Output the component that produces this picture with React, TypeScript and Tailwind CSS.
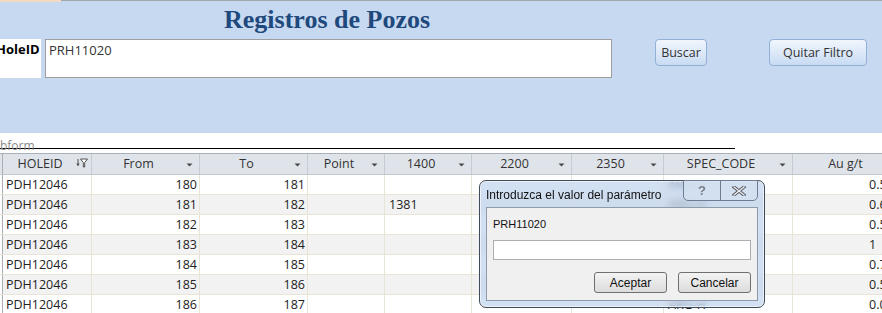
import React from "react";

const cols = [
  { label: "HOLEID", w: 89, filter: true },
  { label: "From", w: 108 },
  { label: "To", w: 108 },
  { label: "Point", w: 77 },
  { label: "1400", w: 87 },
  { label: "2200", w: 100 },
  { label: "2350", w: 92 },
  { label: "SPEC_CODE", w: 129 },
  { label: "Au g/t", w: 120 },
];

const rows = [
  { from: 180, to: 181, v1400: "", au: "0.53" },
  { from: 181, to: 182, v1400: "1381", au: "0.61" },
  { from: 182, to: 183, v1400: "", au: "0.52" },
  { from: 183, to: 184, v1400: "", au: "1" },
  { from: 184, to: 185, v1400: "", au: "0.74" },
  { from: 185, to: 186, v1400: "", au: "0.55" },
  { from: 186, to: 187, v1400: "", au: "0.004" },
];

function DropArrow() {
  return (
    <svg width="7" height="4" viewBox="0 0 7 4" className="absolute right-[6px] top-[9px]">
      <path d="M0.5 0.5 H6.5 L3.5 3.5 Z" fill="#4a4a4a" />
    </svg>
  );
}

function FilterIcon() {
  return (
    <svg width="12" height="10" viewBox="0 0 12 10" className="absolute right-[3px] top-[4px]">
      <path d="M2 1 V7.5" stroke="#505050" strokeWidth="1" />
      <path d="M0.3 5.5 L2 8.3 L3.7 5.5 Z" fill="#505050" />
      <path d="M4.5 1 H11.5 L8.7 4.6 V9 H7.3 V4.6 Z" fill="#fff" stroke="#505050" strokeWidth="1" />
    </svg>
  );
}

export default function App() {
  return (
    <div className="relative w-[882px] h-[313px] overflow-hidden bg-white font-['Open_Sans',sans-serif] text-[#222]">
      {/* window top strip */}
      <div className="flex h-[2px] bg-[#c6d9f0]">
        <div className="w-[61px] bg-[#f1dcc3]" />
        <div className="flex-1 h-[1px] bg-[#a2a6ad]" />
      </div>

      {/* form header */}
      <div className="h-[131px] bg-[#c6d9f0]">
        <div className="h-[37px] pl-[224px] pt-[3px] font-['Liberation_Serif',serif] font-bold text-[26px] leading-[30px] text-[#1f497d]">
          Registros de Pozos
        </div>
        <div className="flex items-start">
          <div className="w-[41px] h-[39px] bg-white overflow-hidden">
            <div className="-ml-[4px] pt-[1px] text-[13px] font-bold text-black leading-[18px]">HoleID</div>
          </div>
          <div className="ml-[4px] w-[567px] h-[39px] border border-[#9e9e9e] bg-white pl-[3px] pt-[1px] text-[13px] leading-[18px] text-[#333]">
            PRH11020
          </div>
          <button className="ml-[43px] w-[52px] h-[27px] rounded-[4px] border border-[#92b1d8] bg-gradient-to-b from-[#f1f6fd] to-[#c8dbf3] pt-[1px] text-[12.5px] text-[#333] leading-none">
            Buscar
          </button>
          <button className="ml-[62px] w-[98px] h-[27px] rounded-[4px] border border-[#92b1d8] bg-gradient-to-b from-[#f1f6fd] to-[#c8dbf3] pt-[1px] text-[12.5px] text-[#333] leading-none">
            Quitar Filtro
          </button>
        </div>
      </div>

      {/* subform label */}
      <div className="relative h-[20px] bg-white">
        <div className="w-[735px] h-[16px] border-b border-black" />
        <div className="absolute left-[-14px] top-[7px] text-[12px] leading-none text-[#8c8c8c]">Subform</div>
      </div>

      {/* datasheet */}
      <div className="flex flex-col border-t border-[#aab1ba]">
        <div className="flex h-[21px] bg-[#dfe4ea] border-b border-[#c3c9d0]">
          <div className="w-[3px] shrink-0 border-r border-[#a9aeb5]" />
          {cols.map((c) => (
            <div
              key={c.label}
              style={{ width: c.w }}
              className="relative shrink-0 border-r border-[#c6ccd3] pr-[14px] text-center text-[12.5px] leading-[20px] text-[#333]"
            >
              {c.label}
              {c.filter ? <FilterIcon /> : <DropArrow />}
            </div>
          ))}
        </div>
        {rows.map((r, i) => (
          <div
            key={i}
            className={`flex h-[20px] border-b border-[#e8e5d6] text-[12.5px] leading-[20px] text-[#222] ${
              i % 2 === 1 ? "bg-[#f2f2f2]" : "bg-white"
            }`}
          >
            <div className="w-[3px] shrink-0 border-r border-[#a9aeb5] bg-white" />
            <div className="w-[89px] shrink-0 border-r border-[#e8e5d6] pl-[3px]">PDH12046</div>
            <div className="w-[108px] shrink-0 border-r border-[#e8e5d6] pr-[2px] text-right">{r.from}</div>
            <div className="w-[108px] shrink-0 border-r border-[#e8e5d6] pr-[2px] text-right">{r.to}</div>
            <div className="w-[77px] shrink-0 border-r border-[#e8e5d6]" />
            <div className="w-[87px] shrink-0 border-r border-[#e8e5d6] pl-[4px]">{r.v1400}</div>
            <div className="w-[100px] shrink-0 border-r border-[#e8e5d6]" />
            <div className="w-[92px] shrink-0 border-r border-[#e8e5d6]" />
            <div className="w-[129px] shrink-0 border-r border-[#e8e5d6] pl-[4px]">ARG-H</div>
            <div className="w-[120px] shrink-0 border-r border-[#e8e5d6] pl-[76px] whitespace-nowrap">{r.au}</div>
          </div>
        ))}
      </div>

      {/* parameter dialog */}
      <div className="absolute left-[479px] top-[180px] w-[286px] h-[128px] rounded-[7px] border border-[#3f4b5a] bg-[#bfd3ee]/70 backdrop-blur-[3px] shadow-[0_0_0_1px_rgba(255,255,255,0.6)_inset]">
        <div className="relative h-[26px] pl-[6px] pt-[5px] font-['Liberation_Sans',sans-serif] text-[12px] leading-[18px] text-[#111]">
          Introduzca el valor del parámetro
          <div className="absolute right-[6px] -top-[1px] flex h-[21px] w-[75px] rounded-b-[5px] border border-[#6d7c90] bg-[#d3e0f0]/80 overflow-hidden">
            <div className="flex flex-1 items-center justify-center border-r border-[#6d7c90] text-[13px] font-bold text-[#7a7f86]">
              ?
            </div>
            <div className="flex flex-1 items-center justify-center">
              <svg width="14" height="10" viewBox="0 0 14 10">
                <path d="M2 1 L12 9 M12 1 L2 9" stroke="#55595f" strokeWidth="3.2" strokeLinecap="square" />
                <path d="M2 1 L12 9 M12 1 L2 9" stroke="#e9edf2" strokeWidth="1.4" strokeLinecap="square" />
              </svg>
            </div>
          </div>
        </div>
        <div className="mx-[6px] h-[94px] border border-[#8e9aa8] bg-[#f0f0f0] px-[6px] font-['Liberation_Sans',sans-serif]">
          <div className="pt-[9px] text-[11px] leading-[14px] text-[#111]">PRH11020</div>
          <div className="mt-[9px] h-[20px] border border-[#abadb3] bg-white" />
          <div className="mt-[12px] flex justify-end gap-[11px]">
            <button className="w-[73px] h-[21px] rounded-[3px] border border-[#707070] bg-gradient-to-b from-[#f3f3f3] to-[#dcdcdc] text-[12px] leading-none text-[#111]">
              Aceptar
            </button>
            <button className="w-[73px] h-[21px] rounded-[3px] border border-[#707070] bg-gradient-to-b from-[#f3f3f3] to-[#dcdcdc] text-[12px] leading-none text-[#111]">
              Cancelar
            </button>
          </div>
        </div>
      </div>
    </div>
  );
}
